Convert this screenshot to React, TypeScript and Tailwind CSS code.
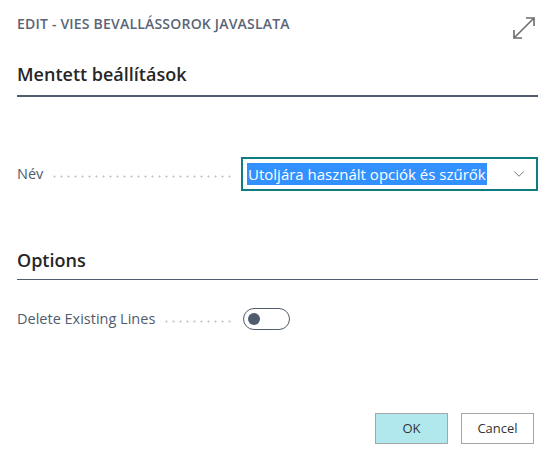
import { ChevronDown } from "lucide-react";

const Leader = () => (
  <div className="flex-1 mx-2 h-[3px] self-center mt-1 bg-[radial-gradient(circle,#c5c9cf_0.9px,transparent_1.2px)] bg-[length:7px_3px] bg-repeat-x" />
);

const App = () => {
  return (
    <div className="w-[555px] h-[466px] bg-white font-['Open_Sans',sans-serif] relative">
      <div className="flex items-start justify-between pl-[17px] pr-[18px] pt-[14px]">
        <h1 className="text-[14px] font-semibold tracking-[0.2px] text-[#5a6577] leading-[20px]">
          EDIT - VIES BEVALLÁSSOROK JAVASLATA
        </h1>
        <svg width="26" height="26" viewBox="0 0 26 26" className="mt-[1px]" fill="none" stroke="#6b6b6b" strokeWidth="1.6">
          <path d="M3 23 L23 3" />
          <path d="M15 3 H23 V11" />
          <path d="M3 15 V23 H11" />
        </svg>
      </div>

      <div className="px-[17px]">
        <div className="mt-[20px] pb-[8px] border-b-2 border-[#505c6d]">
          <h2 className="text-[18px] font-semibold text-[#262626] leading-[26px]">Mentett beállítások</h2>
        </div>

        <div className="flex items-center mt-[60px]">
          <span className="text-[14.5px] text-[#505c6d]">Név</span>
          <Leader />
          <div className="w-[297px] h-[34px] border-2 border-[#0e7c80] flex items-center pl-[4px] pr-[8px]">
            <span className="bg-[#3390ff] text-white text-[15px] leading-[22px] px-[1px]">
              Utoljára használt opciók és szűrők
            </span>
            <ChevronDown className="ml-auto w-[18px] h-[18px] text-[#666]" strokeWidth={1.2} />
          </div>
        </div>

        <div className="mt-[56px] pb-[6px] border-b border-[#505c6d]">
          <h2 className="text-[18px] font-semibold text-[#262626] leading-[26px]">Options</h2>
        </div>

        <div className="flex items-center mt-[28px] w-[273px]">
          <span className="text-[14.5px] text-[#505c6d]">Delete Existing Lines</span>
          <Leader />
          <div className="w-[47px] h-[22px] rounded-full border border-[#505c6d] flex items-center px-[4px]">
            <div className="w-[12px] h-[12px] rounded-full bg-[#505c6d]" />
          </div>
        </div>
      </div>

      <div className="absolute left-0 right-0 top-[413px] flex justify-end gap-[13px] pr-[21px]">
        <button className="w-[73px] h-[31px] bg-[#b1e8ee] border border-[#a6a6a6] text-[13px] text-[#333]">OK</button>
        <button className="w-[73px] h-[31px] bg-white border border-[#a6a6a6] text-[13px] text-[#333]">Cancel</button>
      </div>
    </div>
  );
};

export default App;
